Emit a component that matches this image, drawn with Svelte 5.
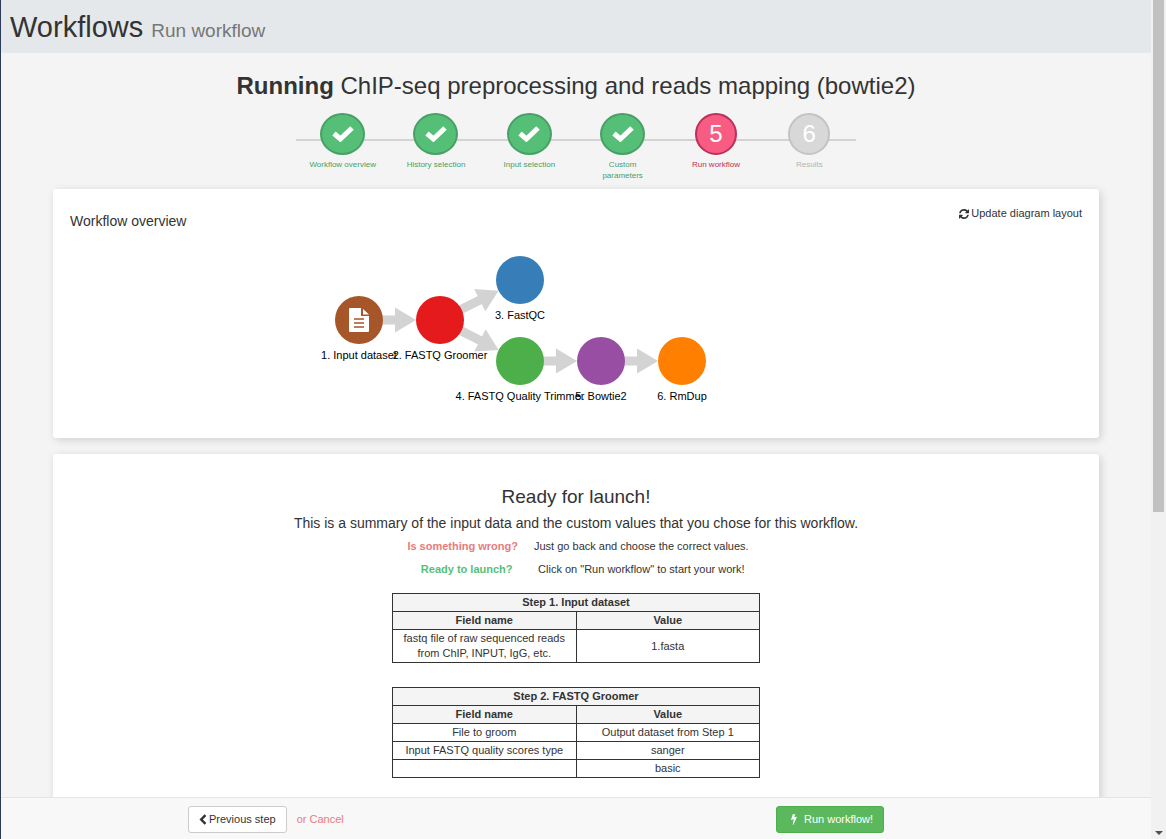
<script>
  const steps = [
    { label: 'Workflow overview', state: 'done' },
    { label: 'History selection', state: 'done' },
    { label: 'Input selection', state: 'done' },
    { label: 'Custom parameters', state: 'done' },
    { label: 'Run workflow', state: 'current' },
    { label: 'Results', state: 'pending' }
  ];

  const nodes = [
    { x: 306, y: 131, color: '#a65628', label: '1. Input dataset', file: true },
    { x: 387, y: 131, color: '#e41a1c', label: '2. FASTQ Groomer' },
    { x: 467, y: 91, color: '#377eb8', label: '3. FastQC' },
    { x: 467, y: 172, color: '#4daf4a', label: '4. FASTQ Quality Trimmer' },
    { x: 548, y: 172, color: '#984ea3', label: '5. Bowtie2' },
    { x: 629, y: 172, color: '#ff7f00', label: '6. RmDup' }
  ];

  const edges = [[0, 1], [1, 2], [1, 3], [3, 4], [4, 5]].map(([from, to]) => {
    const a = nodes[from];
    const b = nodes[to];
    const length = Math.hypot(b.x - a.x, b.y - a.y);
    const angle = (Math.atan2(b.y - a.y, b.x - a.x) * 180) / Math.PI;
    return { a, length, angle };
  });

  const tables = [
    {
      title: 'Step 1. Input dataset',
      rows: [['fastq file of raw sequenced reads from ChIP, INPUT, IgG, etc.', '1.fasta']]
    },
    {
      title: 'Step 2. FASTQ Groomer',
      rows: [
        ['File to groom', 'Output dataset from Step 1'],
        ['Input FASTQ quality scores type', 'sanger'],
        ['', 'basic']
      ]
    }
  ];
</script>

<div class="shell">
  <div class="page">
    <header>
      <h1>Workflows <small>Run workflow</small></h1>
    </header>

    <main>
      <h2><b>Running</b> ChIP-seq preprocessing and reads mapping (bowtie2)</h2>

      <ol class="wizard">
        {#each steps as step, i}
          <li class={step.state}>
            <span class="dot">
              {#if step.state === 'done'}
                <svg width="22" height="16" viewBox="0 0 22 16" aria-hidden="true">
                  <path d="M2 7.500L8.400 13L20 2" fill="none" stroke="#fff" stroke-width="5" stroke-linejoin="miter" />
                </svg>
              {:else}
                {i + 1}
              {/if}
            </span>
            <span class="label">{step.label}</span>
          </li>
        {/each}
      </ol>

      <section class="card diagram">
        <div class="bar">
          <h3>Workflow overview</h3>
          <button class="plain">
            <svg width="10" height="10" viewBox="0 0 1536 1536" aria-hidden="true">
              <path fill="currentColor" d="M1511 928q0 5-1 7-64 268-268 434.500T764 1536q-146 0-282.500-55T238 1324l-129 129q-19 19-45 19t-45-19-19-45V960q0-26 19-45t45-19h448q26 0 45 19t19 45-19 45l-137 137q71 66 161 102t187 36q134 0 250-65t186-179q11-17 53-117 8-23 30-23h192q13 0 22.500 9.500t9.500 22.500zm25-800v448q0 26-19 45t-45 19h-448q-26 0-45-19t-19-45 19-45l138-138Q969 256 768 256q-134 0-250 65T332 500q-11 17-53 117-8 23-30 23H50q-13 0-22.500-9.500T18 608v-7q65-268 270-434.500T768 0q146 0 284 55.500T1297 212l130-129q19-19 45-19t45 19 19 45z" />
            </svg>
            Update diagram layout
          </button>
        </div>
        <svg class="graph" width="100%" height="249" role="img" aria-label="Workflow diagram">
          {#each edges as e}
            <g transform="translate({e.a.x} {e.a.y}) rotate({e.angle})" fill="#d3d3d3">
              <rect x="20" y="-4.500" width={e.length - 62} height="9" />
              <path d="M{e.length - 45} -12.500L{e.length - 24} 0L{e.length - 45} 12.500z" />
            </g>
          {/each}
          {#each nodes as n}
            <circle cx={n.x} cy={n.y} r="24" fill={n.color} />
            {#if n.file}
              <g transform="translate({n.x - 10} {n.y - 12})">
                <path d="M1 0H12V8H20V23Q20 24 19 24H1Q0 24 0 23V1Q0 0 1 0zM14 1L20 6.500H14z" fill="#fff" />
                <path d="M5 11h10M5 15h10M5 19h10" stroke={n.color} stroke-width="1.500" />
              </g>
            {/if}
            <text x={n.x} y={n.y + 39} text-anchor="middle">{n.label}</text>
          {/each}
        </svg>
      </section>

      <section class="card summary">
        <h3>Ready for launch!</h3>
        <p class="lead">This is a summary of the input data and the custom values that you chose for this workflow.</p>
        <div class="hints">
          <strong class="wrong">Is something wrong?</strong>
          <span>Just go back and choose the correct values.</span>
          <strong class="ready">Ready to launch?</strong>
          <span>Click on "Run workflow" to start your work!</span>
        </div>
        {#each tables as table}
          <table>
            <thead>
              <tr><th colspan="2">{table.title}</th></tr>
              <tr><th>Field name</th><th>Value</th></tr>
            </thead>
            <tbody>
              {#each table.rows as row}
                <tr><td>{row[0]}</td><td>{row[1]}</td></tr>
              {/each}
            </tbody>
          </table>
        {/each}
      </section>
    </main>

    <footer>
      <div class="back">
        <button class="btn">
          <svg width="8" height="11" viewBox="0 0 8 11" aria-hidden="true">
            <path d="M6.500 1.200L2.200 5.500L6.500 9.800" fill="none" stroke="currentColor" stroke-width="2.400" />
          </svg>
          Previous step
        </button>
        <a href="#cancel">or Cancel</a>
      </div>
      <button class="btn run">
        <svg width="6" height="11" viewBox="0 0 7 12" aria-hidden="true">
          <path d="M2 0H5L3.800 3.400L7 2.700L2.800 12H2L3.300 5.800L0 6.600z" fill="#fff" />
        </svg>
        Run workflow!
      </button>
    </footer>
  </div>

  <div class="scrollbar" aria-hidden="true">
    <div class="thumb"></div>
    <div class="arrow"></div>
  </div>
</div>

<style>
  :global(body) {
    margin: 0;
    overflow: hidden;
  }
  .shell {
    box-sizing: border-box;
    height: 100vh;
    display: flex;
    border-left: 1px solid #2c3b58;
    background: #f4f4f4;
    color: #333;
    font: 11px/15px "Liberation Sans", Arial, sans-serif;
  }
  .page {
    flex: 1;
    min-width: 0;
    display: flex;
    flex-direction: column;
  }
  h1, h2, h3, p, ol {
    margin: 0;
    padding: 0;
    font-weight: normal;
  }
  header {
    padding: 11px 9px 10px;
    background: #e4e8eb;
  }
  h1 {
    font-size: 29px;
    line-height: 32px;
  }
  small {
    font-size: 19px;
    line-height: 20px;
    color: #777;
  }
  main {
    flex: 1;
    min-height: 0;
    overflow: hidden;
    padding: 20px 52px 0;
  }
  h2 {
    font-size: 24px;
    line-height: 26px;
    text-align: center;
  }
  .wizard {
    position: relative;
    display: flex;
    width: 560px;
    max-width: 100%;
    height: 76px;
    margin: 14px auto 0;
    list-style: none;
  }
  .wizard::before {
    content: "";
    position: absolute;
    top: 26px;
    left: 0;
    right: 0;
    height: 2px;
    background: #d3d3d3;
  }
  .wizard li {
    position: relative;
    flex: 1;
    display: flex;
    flex-direction: column;
    align-items: center;
    gap: 4px;
  }
  .dot {
    box-sizing: border-box;
    width: 42px;
    height: 42px;
    display: flex;
    align-items: center;
    justify-content: center;
    padding-bottom: 2px;
    border: 2px solid;
    border-radius: 50%;
    color: #fff;
    font-size: 24px;
  }
  .done .dot {
    width: 45px;
    padding-bottom: 0;
    background: #55bf78;
    border-color: #47a065;
  }
  .current .dot {
    background: #f95c82;
    border-color: #bb2f5b;
  }
  .pending .dot {
    background: #d8d8d8;
    border-color: #c3c3c3;
  }
  .label {
    max-width: 68px;
    font-size: 8px;
    line-height: 11px;
    text-align: center;
  }
  .done .label { color: #47a065; }
  .current .label { color: #bb2f5b; }
  .pending .label { color: #b3b3b3; }

  .card {
    background: #fff;
    border-radius: 3px;
    box-shadow: 2px 2px 8px rgba(0, 0, 0, 0.15);
    margin-bottom: 16px;
  }
  .diagram {
    position: relative;
    height: 249px;
  }
  .bar {
    position: absolute;
    inset: 0 0 auto;
    display: flex;
    justify-content: space-between;
    padding: 17px 17px;
  }
  .bar h3 {
    padding-top: 7px;
    font-size: 14px;
    line-height: 16px;
  }
  .plain {
    display: flex;
    align-items: center;
    align-self: flex-start;
    gap: 2px;
    padding: 0;
    border: 0;
    background: none;
    font: inherit;
    color: inherit;
  }
  .graph {
    display: block;
  }
  .graph text {
    fill: #000;
    font-size: 11px;
  }
  .bar {
    z-index: 1;
  }
  .summary {
    padding: 32px 17px 24px;
    text-align: center;
  }
  .summary h3 {
    font-size: 19px;
    line-height: 22px;
  }
  .lead {
    margin-top: 5px;
    font-size: 14px;
    line-height: 20px;
  }
  .hints {
    display: grid;
    grid-template-columns: auto auto;
    justify-content: center;
    gap: 8px 16px;
    margin-top: 6px;
    padding-left: 4px;
  }
  .wrong { color: #e77c7c; }
  .ready {
    padding-left: 8px;
    color: #55bf78;
  }
  table {
    width: 368px;
    max-width: 100%;
    margin: 16px auto 24px;
    border-collapse: collapse;
    table-layout: fixed;
  }
  th, td {
    height: 15px;
    padding: 1px 8px;
    border: 1px solid #333;
    text-align: center;
  }
  th { background: #f4f4f4; }

  footer {
    display: grid;
    grid-template-columns: 588fr 375fr;
    align-items: start;
    justify-items: start;
    padding: 8px 0 6px 187px;
    border-top: 1px solid #e5e5e5;
    background: #f8f8f8;
  }
  .back {
    display: flex;
    align-items: center;
    gap: 10px;
  }
  .back a {
    color: #e77c7c;
    text-decoration: none;
  }
  .btn {
    display: flex;
    align-items: center;
    gap: 2px;
    padding: 5px 10px;
    border: 1px solid #ccc;
    border-radius: 3px;
    background: #fff;
    color: #333;
    font: inherit;
  }
  .run {
    gap: 7px;
    padding-left: 14px;
    border-color: #4cae4c;
    background: #5cb85c;
    color: #fff;
  }
  .scrollbar {
    width: 15px;
    display: flex;
    flex-direction: column;
    align-items: center;
    justify-content: space-between;
    background: #f1f1f1;
  }
  .thumb {
    width: 11px;
    height: 61%;
    background: #c1c1c1;
  }
  .arrow {
    margin-bottom: 4px;
    border: 4px solid transparent;
    border-top-color: #505050;
    border-bottom: 0;
  }
</style>
